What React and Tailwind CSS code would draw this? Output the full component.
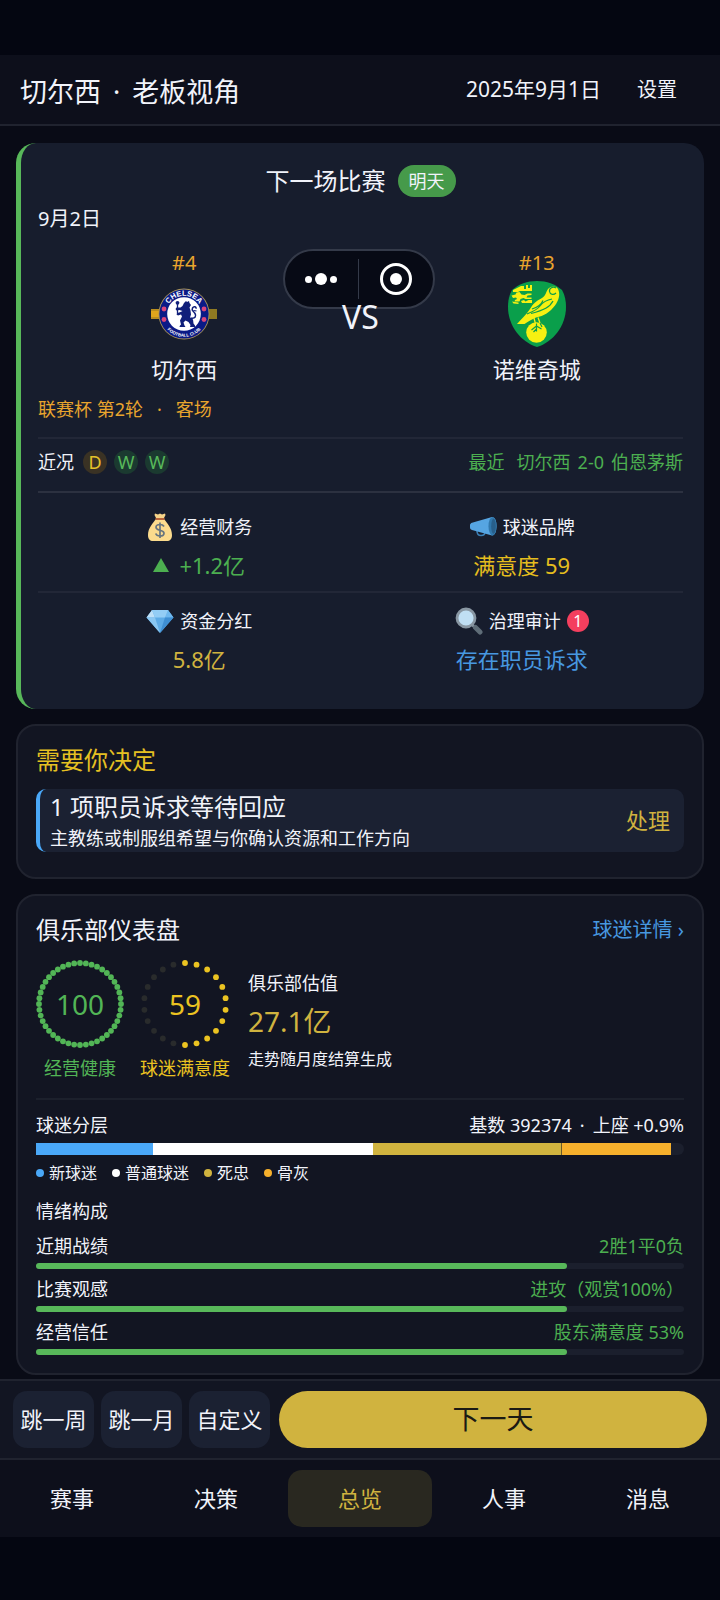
import clsx from "clsx"

const form = ["D", "W", "W"]

const segments = [
  { label: "新球迷", share: 18, color: "bg-[#4aa8f8]" },
  { label: "普通球迷", share: 34, color: "bg-white" },
  { label: "死忠", share: 29, color: "bg-[#d0b33f]" },
  { label: "骨灰", share: 17, color: "bg-[#f6b02c]" },
]

const moods = [
  { label: "近期战绩", value: "2胜1平0负", percent: 82 },
  { label: "比赛观感", value: "进攻（观赏100%）", percent: 82 },
  { label: "经营信任", value: "股东满意度 53%", percent: 82 },
]

const tabs = ["赛事", "决策", "总览", "人事", "消息"]

function ChelseaCrest() {
  return (
    <svg viewBox="0 0 66 66" className="size-[66px]" role="img" aria-label="切尔西队徽">
      <rect x="0" y="28" width="66" height="10" fill="#b98d1f" />
      <rect x="0" y="30" width="9" height="6" fill="#e0a51c" />
      <rect x="57" y="28" width="9" height="10" fill="#8f7a22" />
      <circle cx="33" cy="33" r="25.5" fill="#a8935a" />
      <circle cx="33" cy="33" r="24.6" fill="#0b1a86" />
      <circle cx="33" cy="33" r="16.8" fill="#fff" />
      <defs>
        <path id="crestTop" d="M14.8 33a18.2 18.2 0 0 1 36.4 0" />
        <path id="crestBottom" d="M10.2 33a22.8 22.8 0 0 0 45.6 0" />
      </defs>
      <text fill="#fff" fontSize="7.5" fontWeight="700" textAnchor="middle" fontFamily="Liberation Sans, sans-serif">
        <textPath href="#crestTop" startOffset="50%">CHELSEA</textPath>
      </text>
      <text fill="#fff" fontSize="4.4" fontWeight="700" textAnchor="middle" fontFamily="Liberation Sans, sans-serif">
        <textPath href="#crestBottom" startOffset="50%">FOOTBALL CLUB</textPath>
      </text>
      <g fill="#d8457c">
        <circle cx="13" cy="28" r="2.4" />
        <circle cx="13" cy="38.5" r="2.4" />
        <circle cx="53" cy="28" r="2.4" />
        <circle cx="53" cy="38.5" r="2.4" />
      </g>
      <path d="M33 22l2-2 1 1 2-1 .5 2 1.5 2-1.5 2.500 1 3 .5 4-1 3 3 2 .5 4 1.500 2v1.500h-5l.5-2-2-3-3-1.500-2 2 1 3 1 1.500h-6l.5-1.500 1-1-1-4 2-4-1-2-3 1-1.500-1 1-1.500 3-1 2-1-3-1-3 .5-1-1.500 1-1.500 4 0 2-1.500z" fill="#101f7a" />
      <g fill="none" stroke="#101f7a">
        <path d="M26.500 22.500V33" strokeWidth="1.300" />
        <path d="M39.500 37c5 1 6-2 4.500-4.500s-4-3-2.500-5.500 4-1 3.500.8" strokeWidth="1.500" />
        <path d="M42.500 29.500l3 .5" strokeWidth="1.200" />
      </g>
      <circle cx="26.500" cy="21.800" r="1.900" fill="#101f7a" />
    </svg>
  )
}

function NorwichCrest() {
  return (
    <svg viewBox="0 0 60 66" className="h-[66px] w-[60px]" role="img" aria-label="诺维奇城队徽">
      <path d="M30 0c10 0 18 3 25 9 3 5 4 11 4 17 0 19-13 35-29 40C14 61 1 45 1 26 1 20 2 14 5 9 12 3 20 0 30 0z" fill="#0a9f4b" />
      <g fill="#f6f012">
        <path d="M6 9l8-4h3v3h2V4h2v3h2V4h2v6H13l-2 1-5 0z" />
        <path d="M4.500 14.500l4-1 1-2 3-.5 2 2.500 3 .5 3-1.500h4V14l-4 .5-1 2h5v1.500h-6l-2-1-3 1-1 2.500h-5l.5-1.500 2-1-1-1.500-3 .5zM14 20l3-1 1.500 1.500 3-1.500h3.500v3H15zM5 20.500l3 .500 3.500.500V23l-5-.5z" />
        <path d="M41.500 7.500C44 5 49 4.500 51 8c2.500 5 1 11-3 16.500C43 31 37 35 29 36.500c-4 2-8 4-11.500 6.500H10c4-5 9-9 13-15 3-5 6-8 12-11 4-2 4-7 6.500-9.500z" />
        <circle cx="29.500" cy="51.500" r="10.300" />
      </g>
      <g fill="none" stroke="#0a9f4b" strokeWidth="1.200">
        <path d="M49 7c-3-2-7 0-6.500 3.500S47 14 49 12M45 18c-6 1-9 3-12 7s-8 6-13 8M46 20c-3 6-9 9-22 12.500M36 19.500c-2 5-6 7-11 8.500" />
        <path d="M29.500 42.500v8M29.500 45l-5 4M29.500 45l5 3M29.500 48l-3 3M33 42l2 4" />
      </g>
      <path d="M27 37l1.500 6M31 36.500l2 5.500" stroke="#f6f012" strokeWidth="1.300" />
    </svg>
  )
}

function MoneyBag() {
  return (
    <svg viewBox="0 0 28 30" className="h-[30px] w-7" aria-hidden="true">
      <path d="M9 1.500l3 1 2-1 2 1 3-1 .5 1.500-2 4h-7l-2-4z" fill="#f6d48a" />
      <path d="M10 7h8c3 4 8 9 8 16 0 4-2 6-5 6H7c-3 0-5-2-5-6C2 16 7 11 10 7z" fill="#fbdb8d" />
      <path d="M9.500 6h9v2h-9z" fill="#b9643b" />
      <path d="M18 14.500c-.8-1.500-2.200-2-4-2-2.400 0-4 1.100-4 2.800 0 4 8 2 8 5.900 0 1.800-1.700 2.800-4 2.800-2.200 0-3.700-.8-4.300-2.500M14 10.500v15.500" fill="none" stroke="#67757f" strokeWidth="1.700" />
    </svg>
  )
}

function Megaphone() {
  return (
    <svg viewBox="0 0 28 28" className="size-7" aria-hidden="true">
      <path d="M8 18c0 3 1 4.500 4 4.500s4-1.500 4-3.500" fill="none" stroke="#3b7fb5" strokeWidth="1.500" />
      <path d="M1 12c0-1 1-2 2-2.300L23 4c3 0 4.500 4 4.500 9S26 22.500 23 22.500L3 17c-1.500-.5-2-1.500-2-2.500z" fill="#56a5e2" />
      <ellipse cx="23.500" cy="13.200" rx="4" ry="9.300" fill="#3178ad" />
      <ellipse cx="24.500" cy="13.200" rx="2.300" ry="7.500" fill="#285f8b" />
    </svg>
  )
}

function Gem() {
  return (
    <svg viewBox="0 0 28 28" className="size-7" aria-hidden="true">
      <path d="M6 3h16l5.500 7.500L14 26 .5 10.500z" fill="#5dabe6" />
      <path d="M6 3l3 7.500H.5z" fill="#bfe0f7" />
      <path d="M22 3l-3 7.500h8.500z" fill="#6fb8ee" />
      <path d="M6 3h16l-3 7.500H9z" fill="#93cdf5" />
      <path d="M.5 10.500H9L14 26z" fill="#8ac7f2" />
      <path d="M27.500 10.500H19L14 26z" fill="#3f8fd3" />
    </svg>
  )
}

function Magnifier() {
  return (
    <svg viewBox="0 0 28 28" className="size-7" aria-hidden="true">
      <path d="M17.500 18l3 3" stroke="#8795a0" strokeWidth="3" />
      <path d="M20.500 20.500l4.500 4.500" stroke="#5f6d78" strokeWidth="5" strokeLinecap="round" />
      <circle cx="11" cy="11" r="9" fill="#c0dff4" stroke="#8997a3" strokeWidth="2.800" />
    </svg>
  )
}

function MiniProgramCapsule() {
  return (
    <div className="absolute top-0 left-[calc(50%-2px)] flex h-[60px] w-[152px] -translate-x-1/2 items-center rounded-full border-2 border-[#343a49] bg-[#070a15]">
      <button type="button" aria-label="更多" className="flex flex-1 items-center justify-center gap-[3px]">
        <span className="size-[7px] rounded-full bg-white" />
        <span className="size-3 rounded-full bg-white" />
        <span className="size-[7px] rounded-full bg-white" />
      </button>
      <span className="h-10 w-px bg-[#343a49]" />
      <button type="button" aria-label="关闭" className="flex flex-1 items-center justify-center">
        <span className="flex size-8 items-center justify-center rounded-full border-[3px] border-white">
          <span className="size-3 rounded-full bg-white" />
        </span>
      </button>
    </div>
  )
}

function Team({ rank, name, children }) {
  return (
    <div className="flex flex-1 flex-col items-center">
      <span className="text-xl leading-7 text-[#e9a52d]">{rank}</span>
      <div className="mt-1">{children}</div>
      <span className="mt-2 text-[22px] leading-7">{name}</span>
    </div>
  )
}

function Stat({ icon, label, badge, value, color }) {
  return (
    <div className="flex flex-col items-center gap-1.5">
      <div className="flex h-8 items-center gap-1.5 text-lg">
        {icon}
        <span>{label}</span>
        {badge && (
          <span className="flex size-[22px] items-center justify-center rounded-full bg-[#f43f5e] text-base text-white">
            {badge}
          </span>
        )}
      </div>
      <div className={clsx("flex h-8 items-center gap-2.5 text-[22px]", color)}>{value}</div>
    </div>
  )
}

function Gauge({ value, label, dots, lit, color }) {
  return (
    <div className={clsx("flex flex-col items-center", color)}>
      <div className="relative size-[88px]">
        <svg viewBox="0 0 88 88" className="size-full" aria-hidden="true">
          {Array.from({ length: dots }, (_, i) => {
            const a = (i / dots) * Math.PI * 2
            return (
              <circle
                key={i}
                cx={44 + Math.sin(a) * 41}
                cy={44 - Math.cos(a) * 41}
                r="2.9"
                fill={i < lit ? "currentColor" : "#292b2c"}
              />
            )
          })}
        </svg>
        <span className="absolute inset-0 flex items-center justify-center text-[28px]">{value}</span>
      </div>
      <span className="mt-1.5 text-lg leading-7">{label}</span>
    </div>
  )
}

function NextMatch() {
  return (
    <section className="rounded-[20px] border-l-[5px] border-[#58b85a] bg-[#171d2d] pt-[22px] pr-[21px] pb-[34px] pl-[17px]">
      <div className="flex items-center justify-center gap-3">
        <h2 className="text-2xl leading-8">下一场比赛</h2>
        <span className="flex h-8 items-center rounded-full bg-[#469a4a] px-[11px] text-lg">明天</span>
      </div>
      <p className="mt-2 text-xl leading-7">9月2日</p>
      <div className="relative mt-4 flex">
        <MiniProgramCapsule />
        <Team rank="#4" name="切尔西">
          <ChelseaCrest />
        </Team>
        <span className="relative w-15 pt-12 text-center text-[32px] leading-10">VS</span>
        <Team rank="#13" name="诺维奇城">
          <NorwichCrest />
        </Team>
      </div>
      <p className="mt-3 flex gap-3.5 text-lg leading-7 text-[#e9a52d]">
        <span>联赛杯 第2轮</span>
        <span>·</span>
        <span>客场</span>
      </p>
      <div className="mt-3.5 flex h-[54px] items-center justify-between border-t-2 border-[#222737] pb-1.5 text-lg">
        <div className="flex items-center gap-[7px]">
          <span className="mr-0.5">近况</span>
          {form.map((r, i) => (
            <span
              key={i}
              className={clsx(
                "flex size-6 items-center justify-center rounded-full",
                r === "D" ? "bg-[#3a3224] text-[#e5c22a]" : "bg-[#1b3a30] text-[#58b85a]"
              )}
            >
              {r}
            </span>
          ))}
        </div>
        <p className="flex gap-3 text-[#4caf50]">
          <span>最近</span>
          <span className="flex gap-[7px]">
            <span>切尔西</span>
            <span>2-0</span>
            <span>伯恩茅斯</span>
          </span>
        </p>
      </div>
      <div className="grid grid-cols-2 border-t-2 border-[#2c3140] pt-[18px] pb-2.5">
        <Stat
          icon={<MoneyBag />}
          label="经营财务"
          color="text-[#4caf50]"
          value={
            <>
              <svg viewBox="0 0 16 14" className="h-3.5 w-4" aria-hidden="true">
                <path d="M8 0l8 14H0z" fill="currentColor" />
              </svg>
              <span>+1.2亿</span>
            </>
          }
        />
        <Stat icon={<Megaphone />} label="球迷品牌" value="满意度 59" color="text-[#e5bd1e]" />
      </div>
      <div className="grid grid-cols-2 border-t-2 border-[#222737] pt-3">
        <Stat icon={<Gem />} label="资金分红" value="5.8亿" color="text-[#d0b33f]" />
        <Stat icon={<Magnifier />} label="治理审计" badge="1" value="存在职员诉求" color="text-[#4798e0]" />
      </div>
    </section>
  )
}

function Decisions() {
  return (
    <section className="rounded-[20px] border-2 border-[#20232f] bg-[#121522] px-[18px] pt-[18px] pb-[25px]">
      <h2 className="text-2xl leading-8 text-[#e5c022]">需要你决定</h2>
      <div className="mt-[13px] flex items-center justify-between rounded-[10px] border-l-4 border-[#4aa8f8] bg-[#1b2132] pr-3.5 pl-2.5">
        <div>
          <p className="text-2xl leading-[35px]">1 项职员诉求等待回应</p>
          <p className="text-lg leading-7">主教练或制服组希望与你确认资源和工作方向</p>
        </div>
        <button type="button" className="text-[22px] text-[#d0b33f]">处理</button>
      </div>
    </section>
  )
}

function Dashboard() {
  return (
    <section className="rounded-[20px] border-2 border-[#20232f] bg-[#121522] px-[18px] pt-[18px] pb-[18px]">
      <div className="flex items-center justify-between">
        <h2 className="text-2xl leading-8">俱乐部仪表盘</h2>
        <a href="#fans" className="text-xl text-[#4798e0]">球迷详情 ›</a>
      </div>
      <div className="mt-3.5 flex gap-4">
        <Gauge value="100" label="经营健康" dots={44} lit={44} color="text-[#52b556]" />
        <Gauge value="59" label="球迷满意度" dots={22} lit={12} color="text-[#ebc321]" />
        <div className="ml-0.5 flex flex-col pt-[9px]">
          <span className="text-lg leading-7">俱乐部估值</span>
          <span className="mt-1 text-[28px] leading-10 text-[#d0b33f]">27.1亿</span>
          <span className="mt-1 text-base leading-7">走势随月度结算生成</span>
        </div>
      </div>
      <div className="mt-4 flex items-center justify-between border-t-2 border-[#1c202c] pt-[11px] text-lg leading-7">
        <h3>球迷分层</h3>
        <p className="flex gap-2">
          <span>基数 392374</span>
          <span>·</span>
          <span>上座 +0.9%</span>
        </p>
      </div>
      <div className="mt-1 flex h-3 overflow-hidden rounded-r-full bg-[#1b1f2d]">
        {segments.map((s, i) => (
          <div
            key={s.label}
            className={clsx(s.color, i === 3 && "border-l border-[#6b5a28]")}
            style={{ width: `${s.share}%` }}
          />
        ))}
      </div>
      <ul className="mt-1 flex gap-[15px] text-base leading-7">
        {segments.map((s) => (
          <li key={s.label} className="flex items-center gap-[5px]">
            <span className={clsx("size-2 rounded-full", s.color)} />
            {s.label}
          </li>
        ))}
      </ul>
      <h3 className="mt-2.5 text-lg leading-7">情绪构成</h3>
      <div className="mt-[7px] flex flex-col gap-1.5">
        {moods.map((m) => (
          <div key={m.label} className="flex flex-col gap-[3px]">
            <div className="flex justify-between text-lg leading-7">
              <span>{m.label}</span>
              <span className="text-[#4caf50]">{m.value}</span>
            </div>
            <div className="h-1.5 rounded-full bg-[#1b1f2d]">
              <div className="h-full rounded-full bg-[#58b85a]" style={{ width: `${m.percent}%` }} />
            </div>
          </div>
        ))}
      </div>
    </section>
  )
}

function SkipButton({ children }) {
  return (
    <button type="button" className="h-[57px] w-[81px] rounded-[14px] bg-[#1b2132] text-[22px]">
      {children}
    </button>
  )
}

export default function App() {
  return (
    <div className="flex min-h-screen flex-col bg-[#090b16] font-['Noto_Sans','Noto_Sans_CJK_SC',sans-serif] text-[#f1f3fa]">
      <div className="h-[55px] bg-[#040611]" />
      <header className="flex h-[71px] items-center justify-between border-b-2 border-[#20232f] bg-[#0d0f1b] pr-[19px] pl-5">
        <h1 className="flex gap-3 pt-1 text-[27px] leading-8">
          <span>切尔西</span>
          <span>·</span>
          <span>老板视角</span>
        </h1>
        <div className="flex items-center gap-3">
          <time dateTime="2025-09-01" className="text-[21px]">2025年9月1日</time>
          <button type="button" className="px-6 text-xl">设置</button>
        </div>
      </header>
      <main className="flex flex-col gap-[15px] px-4 pt-[17px] pb-1">
        <NextMatch />
        <Decisions />
        <Dashboard />
      </main>
      <div className="flex gap-[7px] border-t-2 border-[#20232f] bg-[#121522] px-[13px] py-2.5">
        <SkipButton>跳一周</SkipButton>
        <SkipButton>跳一月</SkipButton>
        <SkipButton>自定义</SkipButton>
        <button type="button" className="ml-0.5 flex-1 rounded-full bg-[#d0b33f] text-[27px] text-[#1b1a14]">
          下一天
        </button>
      </div>
      <nav className="grid grid-cols-5 border-t-2 border-[#20232f] bg-[#0d0f1b] py-2.5">
        {tabs.map((tab) => (
          <button
            key={tab}
            type="button"
            className={clsx("h-[57px] rounded-[14px] text-[22px]", tab === "总览" && "bg-[#292820] text-[#d0b33f]")}
          >
            {tab}
          </button>
        ))}
      </nav>
      <div className="flex-1 bg-[#040611]" />
    </div>
  )
}
